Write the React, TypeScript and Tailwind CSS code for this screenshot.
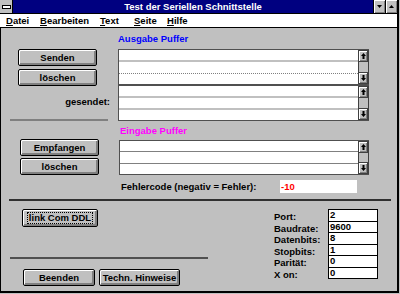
import React from "react";

function Btn({ children, className }: { children: React.ReactNode; className: string }) {
  return (
    <div
      className={`flex items-center justify-center bg-[#c0c0c0] border border-black rounded-[2px] shadow-[inset_1px_1px_0_#ffffff,inset_-2px_-2px_0_#808080] text-[9.5px] font-bold text-black leading-none ${className}`}
    >
      {children}
    </div>
  );
}

function Arrow({ up }: { up?: boolean }) {
  return (
    <div className="h-[12px] flex items-center justify-center bg-[#c0c0c0] border border-[#404040] shadow-[inset_1px_1px_0_#ffffff,inset_-1px_-1px_0_#808080]">
      <svg width="5" height="6" viewBox="0 0 5 6">
        {up ? (
          <path d="M2.5 0 L5 3 L3.5 3 L3.5 6 L1.5 6 L1.5 3 L0 3Z" fill="black" />
        ) : (
          <path d="M2.5 6 L5 3 L3.5 3 L3.5 0 L1.5 0 L1.5 3 L0 3Z" fill="black" />
        )}
      </svg>
    </div>
  );
}

function ListBox({ h, sep, dotted }: { h: string; sep: string; dotted?: boolean }) {
  return (
    <div className={`flex ${h} border-t border-l border-b border-[#505050] bg-white`}>
      <div className="flex-1 flex flex-col">
        <div className="flex-1" />
        <div className={sep} />
        <div className="flex-1" />
        {dotted ? <div className="border-t border-dotted border-[#808080]" /> : <div className={sep} />}
        <div className="flex-1" />
      </div>
      <div className="w-[11px] flex flex-col bg-[#c0c0c0] border-r border-[#404040]">
        <Arrow up />
        <div className="flex-1 border-l border-[#404040]" />
        <Arrow />
      </div>
    </div>
  );
}

const params: [string, string][] = [
  ["Port:", "2"],
  ["Baudrate:", "9600"],
  ["Datenbits:", "8"],
  ["Stopbits:", "1"],
  ["Parität:", "0"],
  ["X on:", "0"],
];

export default function App() {
  return (
    <div className="w-[400px] h-[294px] bg-[#c0c0c0] overflow-hidden font-['Liberation_Sans',Arial,sans-serif] text-black">
      <div className="w-[399px] h-[293px] flex flex-col border-r-2 border-b-2 border-black">
        {/* Title bar */}
        <div className="h-[14px] flex border-b border-black bg-[#000080]">
          <div className="w-[13px] h-[13px] bg-[#c0c0c0] border-r border-black flex items-center justify-center">
            <div className="w-[9px] h-[4px] bg-white border border-black" />
          </div>
          <div className="flex-1 text-center text-white font-bold text-[9.5px] leading-[13px]">
            Test der Seriellen Schnittstelle
          </div>
          <div className="w-[12px] h-[13px] bg-[#c0c0c0] border-l border-black flex items-center justify-center shadow-[inset_1px_1px_0_#ffffff,inset_-1px_-1px_0_#808080]">
            <svg width="5" height="3" viewBox="0 0 5 3">
              <path d="M0 0 L5 0 L2.5 3Z" fill="black" />
            </svg>
          </div>
          <div className="w-[12px] h-[13px] bg-[#c0c0c0] border-l border-black flex items-center justify-center shadow-[inset_1px_1px_0_#ffffff,inset_-1px_-1px_0_#808080]">
            <svg width="5" height="3" viewBox="0 0 5 3">
              <path d="M0 3 L5 3 L2.5 0Z" fill="black" />
            </svg>
          </div>
        </div>
        {/* Menu bar */}
        <div className="h-[14px] flex bg-white border-b border-black text-[9.5px] font-bold leading-[13px] pl-[6px]">
          <span className="w-[34px]"><u>D</u>atei</span>
          <span className="w-[60px]"><u>B</u>earbeiten</span>
          <span className="w-[34px]"><u>T</u>ext</span>
          <span className="w-[33px]"><u>S</u>eite</span>
          <span><u>H</u>ilfe</span>
        </div>
        {/* Client */}
        <div className="flex-1 flex flex-col border-l border-black">
          {/* Band 1 */}
          <div className="flex">
            <div className="w-[117px] flex flex-col">
              <div className="h-[21px]" />
              <Btn className="ml-[17px] w-[79px] h-[17px]">Senden</Btn>
              <Btn className="mt-[3px] ml-[17px] w-[79px] h-[17px]">löschen</Btn>
              <div className="flex-1 flex items-center justify-end pr-[8px] text-[9.5px] font-bold">gesendet:</div>
              <div className="ml-[9px] w-[98px] h-[2px] bg-[#808080]" />
            </div>
            <div className="w-[251px] flex flex-col">
              <div className="h-[21px] pt-[6px] text-[9.5px] leading-[10px] font-bold text-[#0000ff]">Ausgabe Puffer</div>
              <ListBox h="h-[36px]" sep="h-[2px] bg-[#c0c0c0]" dotted />
              <ListBox h="h-[36px]" sep="h-[2px] bg-[#c0c0c0]" />
            </div>
          </div>
          {/* Band 2 */}
          <div className="flex">
            <div className="w-[117px] flex flex-col">
              <div className="h-[18px]" />
              <Btn className="ml-[19px] w-[79px] h-[17px]">Empfangen</Btn>
              <Btn className="mt-[2px] ml-[19px] w-[79px] h-[17px]">löschen</Btn>
            </div>
            <div className="w-[251px] flex flex-col">
              <div className="h-[19px] pt-[5px] pl-[2px] text-[9.5px] leading-[10px] font-bold text-[#ff00ff]">Eingabe Puffer</div>
              <div className="ml-[1px]">
                <ListBox h="h-[35px]" sep="h-px bg-[#808080]" />
              </div>
            </div>
          </div>
          <div className="flex mt-[5px] h-[13px] items-center">
            <div className="ml-[120px] w-[159px] text-[9.5px] font-bold leading-[13px]">Fehlercode (negativ = Fehler):</div>
            <div className="w-[77px] h-[13px] bg-white text-[#ff0000] text-[9.5px] font-bold leading-[13px] pl-[1px]">-10</div>
          </div>
          <div className="mt-[6px] ml-[8px] w-[382px] h-[2px] bg-[#303030]" />
          {/* Band 3 */}
          <div className="flex">
            <div className="w-[273px] flex flex-col">
              <Btn className="mt-[8px] ml-[21px] w-[76px] h-[18px]">
                <span className="outline outline-1 outline-dotted outline-black px-[1px]">link Com DDL</span>
              </Btn>
              <div className="mt-[30px] ml-[9px] w-[198px] h-[2px] bg-[#505050]" />
              <div className="flex mt-[10px]">
                <Btn className="ml-[22px] w-[72px] h-[17px]">Beenden</Btn>
                <Btn className="ml-[4px] w-[81px] h-[17px]">Techn. Hinweise</Btn>
              </div>
            </div>
            <div className="flex flex-col mt-[8px]">
              {params.map(([l, v], i) => (
                <div key={l} className={`flex ${i % 2 === 0 ? "h-[12px]" : "h-[11px]"}`}>
                  <div className="w-[54px] text-[9.5px] font-bold leading-[11px] pt-[2px]">{l}</div>
                  <div
                    className={`w-[50px] bg-white border-x border-t border-black text-[9.5px] font-bold leading-[10px] pl-[1px] ${
                      i === params.length - 1 ? "border-b h-[12px]" : ""
                    }`}
                  >
                    {v}
                  </div>
                </div>
              ))}
            </div>
          </div>
        </div>
      </div>
    </div>
  );
}
